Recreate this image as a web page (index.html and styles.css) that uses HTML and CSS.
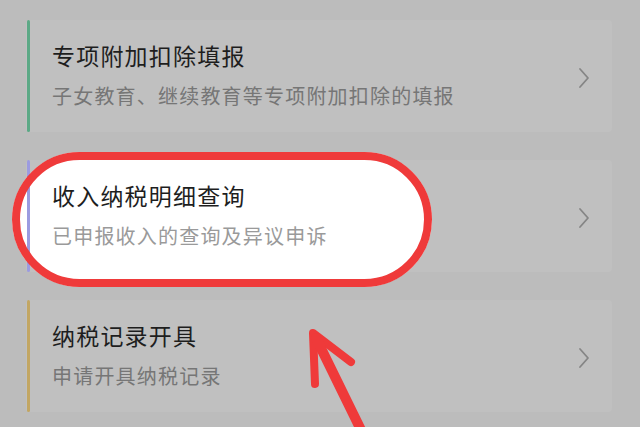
FILE: index.html
```html
<!DOCTYPE html>
<html lang="zh-CN">
<head>
<meta charset="utf-8">
<link rel="stylesheet" href="styles.css">
</head>
<body>
<div class="list">
  <div class="card">
    <span class="bar bar-green"></span>
    <div class="text">
      <div class="title">专项附加扣除填报</div>
      <div class="sub">子女教育、继续教育等专项附加扣除的填报</div>
    </div>
    <svg class="chev" width="12" height="22" viewBox="0 0 12 22"><path d="M2 2 L10 11 L2 20" fill="none" stroke="#858585" stroke-width="1.8" stroke-linecap="round" stroke-linejoin="round"/></svg>
  </div>
  <div class="card card-hl">
    <span class="pill-fill"></span>
    <span class="bar bar-purple"></span>
    <div class="text">
      <div class="title">收入纳税明细查询</div>
      <div class="sub sub-light">已申报收入的查询及异议申诉</div>
    </div>
    <svg class="chev" width="12" height="22" viewBox="0 0 12 22"><path d="M2 2 L10 11 L2 20" fill="none" stroke="#858585" stroke-width="1.8" stroke-linecap="round" stroke-linejoin="round"/></svg>
    <span class="pill-ring"></span>
  </div>
  <div class="card">
    <span class="bar bar-gold"></span>
    <div class="text">
      <div class="title">纳税记录开具</div>
      <div class="sub">申请开具纳税记录</div>
    </div>
    <svg class="chev" width="12" height="22" viewBox="0 0 12 22"><path d="M2 2 L10 11 L2 20" fill="none" stroke="#858585" stroke-width="1.8" stroke-linecap="round" stroke-linejoin="round"/></svg>
  </div>
</div>
<svg class="arrow" width="640" height="427" viewBox="0 0 640 427">
  <path d="M315 384 L313 333 L351 362" fill="none" stroke="#ef3a3a" stroke-width="8" stroke-linecap="round" stroke-linejoin="round"/>
  <path d="M316 338 L362 432" fill="none" stroke="#ef3a3a" stroke-width="10" stroke-linecap="round"/>
</svg>
</body>
</html>
```

FILE: styles.css
```css
html, body {
  margin: 0;
  padding: 0;
}
body {
  width: 640px;
  height: 427px;
  overflow: hidden;
  background: #bcbcbc;
  font-family: "Noto Sans CJK SC", "Noto Sans", sans-serif;
  position: relative;
}
.list {
  display: flex;
  flex-direction: column;
  gap: 28px;
  padding: 20px 28px 0 26px;
}
.card {
  position: relative;
  height: 112px;
  background: #c0c0c0;
  border-radius: 4px;
  display: flex;
  align-items: center;
  justify-content: space-between;
  padding: 0 22px 0 26px;
}
.bar {
  position: absolute;
  left: 1px;
  top: 0;
  bottom: 0;
  width: 3px;
  border-radius: 3px;
  z-index: 1;
}
.bar-green { background: #5ca986; }
.bar-purple { background: #9c9be0; }
.bar-gold { background: #c2a663; }
.text {
  position: relative;
  z-index: 1;
  display: flex;
  flex-direction: column;
  gap: 10px;
  margin-top: -2px;
}
.title {
  font-size: 23px;
  line-height: 32px;
  color: #1e1e1e;
  letter-spacing: 1.2px;
}
.sub {
  font-size: 20px;
  line-height: 30px;
  color: #767676;
  letter-spacing: 1.2px;
}
.sub-light { color: #9a9a9a; }
.chev {
  position: relative;
  z-index: 1;
  margin-top: 4px;
}
.pill-fill {
  position: absolute;
  left: -14px;
  top: -8px;
  width: 420px;
  height: 135px;
  border-radius: 68px;
  background: #ffffff;
  z-index: 0;
}
.pill-ring {
  position: absolute;
  left: -14px;
  top: -8px;
  width: 420px;
  height: 135px;
  box-sizing: border-box;
  border: 8px solid #ef3a3a;
  border-radius: 68px;
  z-index: 2;
}
.arrow {
  position: absolute;
  left: 0;
  top: 0;
  pointer-events: none;
}
```
